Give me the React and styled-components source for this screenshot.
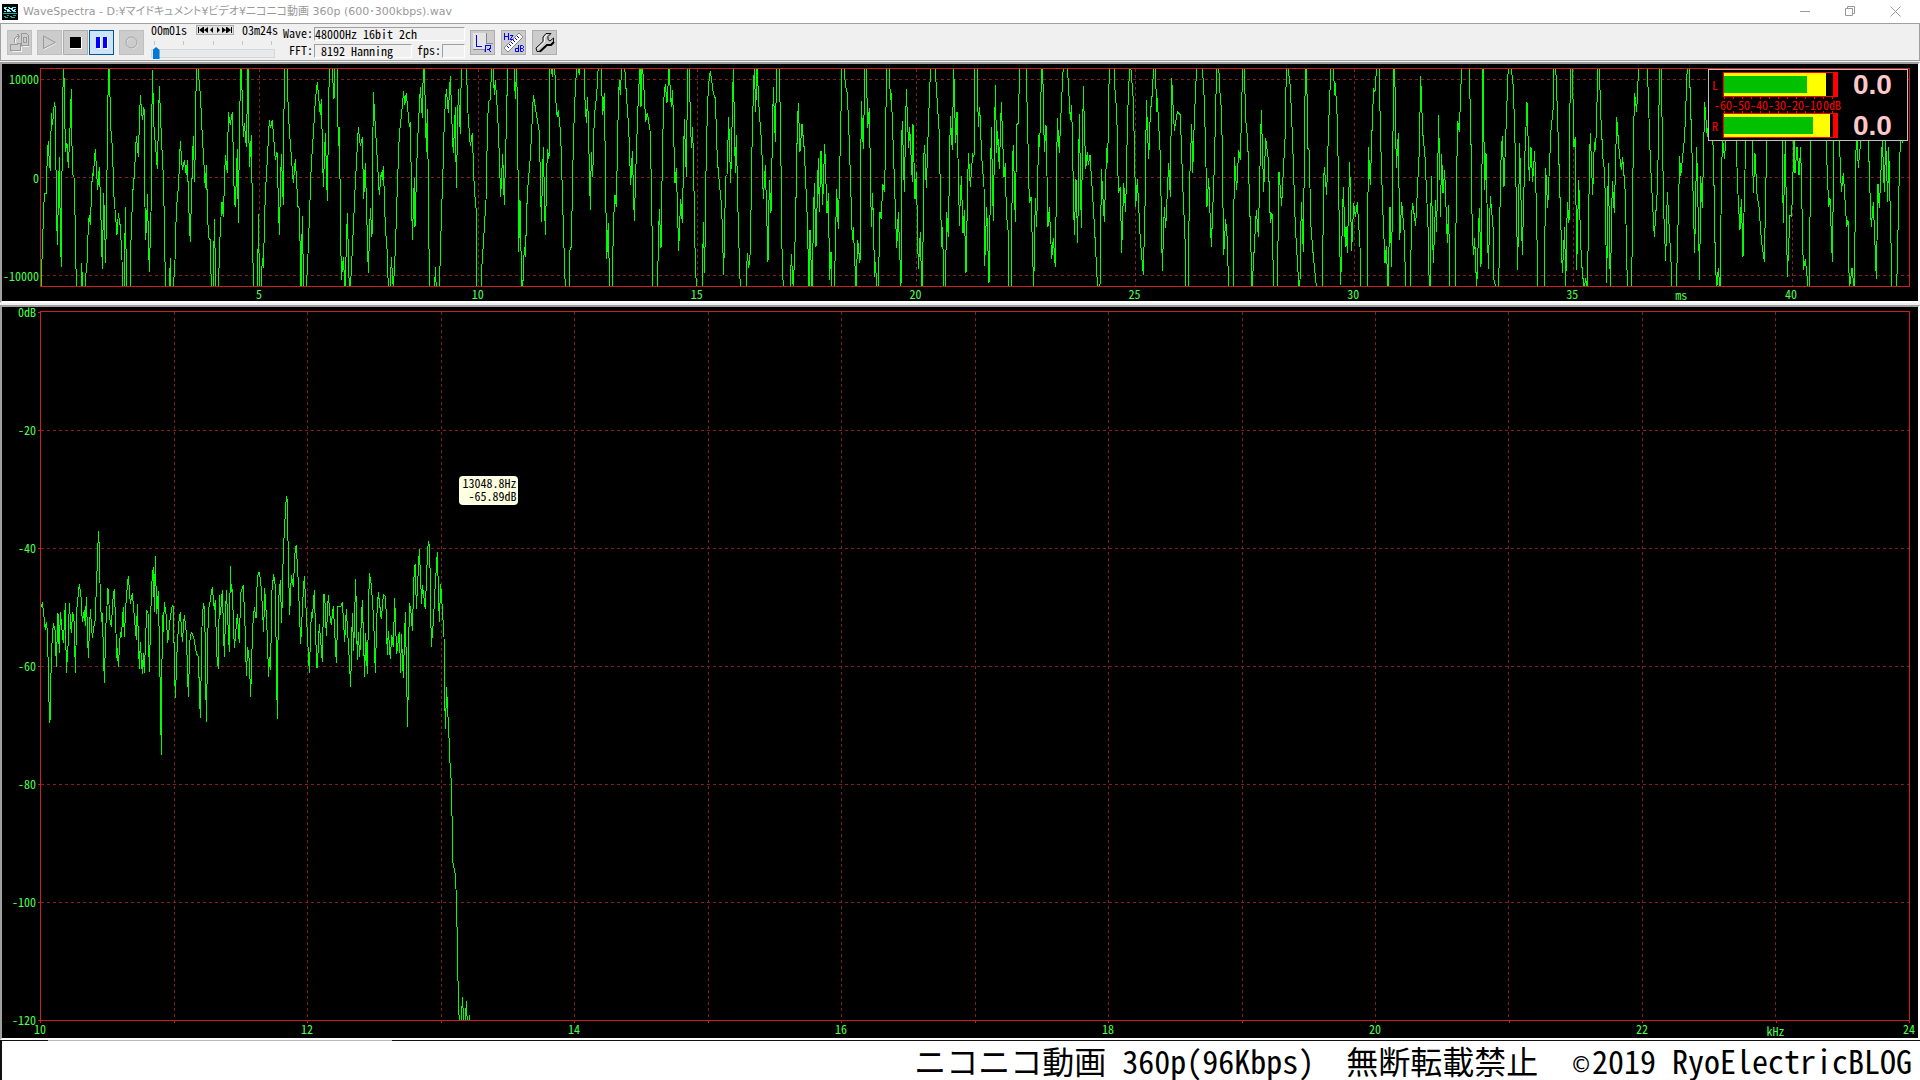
import React from 'react';
import styled, { createGlobalStyle } from 'styled-components';

const GlobalStyle = createGlobalStyle`
    * {
        box-sizing: border-box;
    }

    body {
        margin: 0;
        background-color: #ffffff;
        font-family: "Noto Sans Mono CJK JP", "Noto Sans CJK JP", monospace;
        font-size: 12px;
        line-height: 12px;
        color: #000000;
    }

    button {
        font: inherit;
        padding: 0;
        margin: 0;
    }
`;

const Window=styled.div`
    display: flex;
    flex-direction: column;
    min-height: 100vh;
    background-color: #f0f0f0;
`;

/* title bar */

const TitleBar=styled.header`
    display: flex;
    align-items: center;
    height: 23px;
    padding: 0 16px 0 2px;
    background-color: #ffffff;
`;

const Title=styled.h1`
    flex: 1;
    margin: 0 0 0 5px;
    font-family: "DejaVu Sans", "Noto Sans CJK JP", sans-serif;
    font-size: 11px;
    line-height: 20px;
    font-weight: 400;
    font-feature-settings: "palt";
    color: #999999;
    white-space: nowrap;
`;

const WindowButtons=styled.div`
    display: flex;
    gap: 27px;
`;

const WindowButton=styled.button`
    display: flex;
    align-items: center;
    justify-content: center;
    width: 18px;
    height: 20px;
    border: 0;
    background: none;
`;

/* toolbar */

const ToolBar=styled.div`
    display: flex;
    align-items: center;
    gap: 5px;
    height: 38px;
    margin-bottom: 1px;
    padding: 0 6px;
    border: 1px solid #a0a0a0;
    background-color: #f0f0f0;
`;

const ToolGroup=styled.div`
    display: flex;
    gap: ${props => props.$gap || "1px"};
`;

const ToolButton=styled.button`
    display: flex;
    align-items: center;
    justify-content: center;
    width: 25px;
    height: 25px;
    border: 1px solid ${props => props.$active ? "#005499" : props.disabled ? "#bfbfbf" : "#adadad"};
    background-color: ${props => props.$active ? "#cce4f7" : "#cccccc"};
`;

const Position=styled.div`
    display: flex;
    flex-direction: column;
    width: 129px;
    height: 36px;
    padding-left: 2px;
`;

const PositionTimes=styled.div`
    display: flex;
    align-items: center;
    justify-content: space-between;
    height: 12px;
`;

const Transport=styled.div`
    display: flex;
    align-items: center;
    justify-content: center;
    width: 38px;
    height: 10px;
    border: 1px solid #adadad;
    background-color: #e1e1e1;
`;

const TransportButton=styled.button`
    display: flex;
    border: 0;
    background: none;
`;

const SliderTicks=styled.div`
    display: flex;
    justify-content: space-between;
    width: 118px;
    height: 4px;
    margin: 5px 0 0 3px;
`;

const SliderTick=styled.span`
    width: 1px;
    height: 4px;
    background-color: #c4c4c4;
`;

const Slider=styled.input`
    appearance: none;
    width: 124px;
    height: 13px;
    margin: 2px 0 0;
    background: none;

    &::-webkit-slider-runnable-track {
        height: 9px;
        border: 1px solid #d6d6d6;
        background-color: #e7eaea;
    }

    &::-webkit-slider-thumb {
        appearance: none;
        width: 7px;
        height: 12px;
        margin-top: -3px;
        background-color: #0078d7;
        clip-path: polygon(0 3px, 50% 0, 100% 3px, 100% 100%, 0 100%);
    }
`;

const Info=styled.div`
    display: flex;
    flex-direction: column;
    gap: 3px;
    width: 182px;
`;

const InfoRow=styled.div`
    display: flex;
    gap: 1px;
    height: 14px;
`;

const InfoLabel=styled.label`
    width: ${props => props.$narrow ? "28px" : "30px"};
    text-align: right;
    line-height: 12px;
`;

const Readout=styled.output`
    flex: ${props => props.$grow || 1};
    min-width: 0;
    line-height: 11px;
    border: 1px solid;
    border-color: #a0a0a0 #ffffff #ffffff #a0a0a0;
    white-space: pre;
`;

/* chart panels */

const Panel=styled.section`
    position: relative;
    display: grid;
    flex: ${props => props.$fill ? "1" : "none"};
    grid-template-columns: 38px minmax(0, 1fr);
    grid-template-rows: ${props => props.$fill ? "minmax(0, 1fr) 17px" : "219px 14px"};
    margin-top: ${props => props.$fill ? "2px" : "0"};
    padding: 4px 8px 0 0;
    border: 2px solid;
    border-color: #a0a0a0 #ffffff #ffffff #a0a0a0;
    background-color: #000000;
    color: #4cff4c;
`;

const Plot=styled.div`
    position: relative;
    min-height: 0;
    border: 1px solid #cc1f1f;
`;

const Chart=styled.svg`
    display: block;
    position: absolute;
    width: 100%;
    height: 100%;
    shape-rendering: crispEdges;

    * {
        fill: none;
        vector-effect: non-scaling-stroke;
    }
`;

const GridLine=styled.path`
    stroke: #802020;
    stroke-dasharray: 3 3;
`;

const Trace=styled.polyline`
    stroke: #00ff00;
`;

const ScaleY=styled.div`
    display: flex;
    flex-direction: column;
    justify-content: space-between;
    padding: ${props => props.$inset ? "11px 1px 11px 0" : "1px 0"};
`;

const MarkY=styled.span`
    display: flex;
    align-items: center;
    justify-content: flex-end;
    gap: ${props => props.$tick ? "2px" : "0"};
    height: 0;

    &::after {
        content: "";
        width: ${props => props.$tick ? "2px" : "0"};
        height: 1px;
        background-color: #cc1f1f;
    }
`;

const ScaleX=styled.div`
    display: flex;
    grid-column: 2;
    padding-left: 1px;
`;

const MarkX=styled.span`
    display: flex;
    flex-direction: column;
    align-items: flex-end;
    flex: ${props => props.$span} 0 0;
    width: 0;

    span {
        width: 24px;
        margin: ${props => props.$unit ? "2px" : props.$tick ? "0" : "1px"} -11px 0 0;
        text-align: center;
    }

    &::before {
        content: "";
        width: 1px;
        height: ${props => props.$tick ? "2px" : "0"};
        background-color: #cc1f1f;
    }
`;

const Cursor=styled.div`
    position: absolute;
    left: 22.4%;
    top: 23.2%;
    padding: 0 2px 3px 3px;
    border-radius: 4px;
    background-color: #ffffe1;
    color: #000000;
    line-height: 13px;
    text-align: right;
`;

/* level meter */

const Meter=styled.div`
    position: absolute;
    top: 5px;
    right: 10px;
    display: grid;
    grid-template-columns: 14px 115px 1fr;
    grid-template-rows: 25px 16px 25px;
    align-items: center;
    width: 200px;
    padding: 2px 0;
    border: 1px solid #c0c0c0;
    background-color: #000000;
    color: #ff0000;
`;

const Channel=styled.span`
    padding-left: 3px;
`;

const Bar=styled.div`
    display: flex;
    justify-content: space-between;
    height: 25px;
    border: 1px solid #ff0000;
    border-right-width: 5px;
`;

const Peak=styled.div`
    display: flex;
    align-items: center;
    background-color: #ffff00;
`;

const Level=styled.div`
    height: 17px;
    background-color: #00c000;
`;

const Value=styled.span`
    padding-left: 15px;
    font-family: "Liberation Sans", sans-serif;
    font-size: 28px;
    line-height: 24px;
    font-weight: 700;
    color: #ffc8c8;
`;

const MeterScale=styled.div`
    display: flex;
    flex-direction: column;
    justify-content: space-between;
    grid-column: 1 / 4;
    height: 16px;
    padding-left: 5px;
`;

const MeterTicks=styled.div`
    display: flex;
    justify-content: space-between;
    width: 109px;
    height: 2px;
    margin-left: 10px;

    i {
        width: 1px;
        background-color: #ff0000;
    }
`;

const MeterText=styled.div`
    display: flex;
    gap: 1px;
    height: 12px;
    white-space: nowrap;
`;

/* caption below the window */

const Caption=styled.footer`
    height: 40px;
    padding-right: 8px;
    border-left: 2px solid #101010;
    background: linear-gradient(to right, #101010 46px, #b8b8b8 46px, #b8b8b8 390px, #101010 390px) no-repeat #ffffff;
    background-size: 100% 1px;
    font-size: 32px;
    line-height: 40px;
    text-align: right;
    white-space: pre;
`;

const Copyright=styled.span`
    padding: 0 3px;
    font-family: "DejaVu Sans Mono", monospace;
    font-size: 26px;
    line-height: 26px;
`;

const WAVE_RUNS = [
    { x: -123, points: "124,678 127,560 133,400 139,400 142,280 145,243 148,310 151,332 154,160 157,195 160,170 163,127 166,145 169,420 172,555 178,292 181,518 184,622 187,200 190,25 193,70 196,275 201,250 205,325 211,180 214,88 217,340 222,352 226,500 229,688 244,688 245,610 248,688 256,688 258,640 262,600 265,490 268,465 271,495 277,340 280,345 286,268 293,390 298,320 302,440 307,628 311,400 317,610 320,400 323,200 325,17 328,17 332,200 337,260 342,410 351,524 355,460 361,500 366,600 367,688 373,688 376,442 380,688 390,688 392,570 398,400 403,345 409,228 415,290 421,105 427,180 432,142 436,540 440,500 442,403 448,637 453,460 457,30 462,200 472,328 478,78 484,230 490,350 494,520 496,688 508,688 511,595 513,688 520,688 525,600 529,450 536,370 541,243 547,330 553,300 559,345 562,300 568,490 571,545 574,420 580,228 584,365 587,180 589,17 595,17 598,80 601,100 607,230 616,385 619,316 625,530 631,540 634,688 640,688 643,478 648,688 655,688 661,500 666,425 670,472 676,285 682,340 685,157 691,195 697,155 703,420 706,440 712,268 715,488 719,180 722,17 724,17 730,232 733,190 739,260 744,17 748,322 754,226 757,440 760,688 773,688 775,463 779,688 783,688 787,595 790,625 796,400 802,300 808,180 811,205 817,180 826,300 831,277 838,524 844,282 850,435 853,17 861,17 865,160 871,250 880,370 886,298 894,440 898,445 903,688 907,468 911,688 919,688 925,560 929,450 934,310 940,225 946,120 952,67 961,165 964,118 970,380 976,220 982,422 988,17 996,17 1002,118 1004,17 1011,17 1015,257 1018,200 1024,660 1030,592 1035,688 1042,460 1048,688 1051,688 1057,570 1066,370 1075,202 1081,258 1087,232 1091,418 1096,310 1105,640 1111,445 1116,532 1120,97 1126,200 1132,300 1138,406 1144,335 1147,360 1150,318 1156,500 1162,580 1165,688 1171,688 1174,590 1180,688 1186,570 1192,380 1198,220 1204,170 1211,92 1214,135 1219,100 1228,200 1231,185 1237,540 1243,355 1245,500 1252,260 1261,82 1267,175 1270,17 1273,17 1279,275 1282,148 1286,440 1288,688 1304,688 1306,620 1309,688 1318,688 1324,480 1330,300 1333,175 1339,88 1345,158 1351,48 1357,220 1360,280 1366,142 1369,385 1375,88 1381,222 1384,17 1399,17 1404,160 1411,258 1417,220 1423,390 1429,455 1431,688" },
    { x: 1317, points: "4,688 5,630 12,520 18,420 23,180 26,123 31,120 35,17 39,17 43,105 46,60 52,150 55,205 62,410 68,283 73,435 79,200 83,17 102,17 106,118 110,17 113,200 116,575 120,420 125,672 128,688 133,560 136,592 142,400 151,290 157,175 160,105 172,180 178,215 184,485 190,262 196,524 202,268 207,298 209,17 213,17 217,50 219,17 224,17 229,155 232,170 235,150 242,220 250,500 256,688 268,688 270,570 274,560 280,250 284,130 290,17 294,17 298,45 300,17 312,17 315,120 319,188 323,110 331,450 334,275 338,352 343,170 350,105 355,17 363,17 368,165 373,100 380,598 385,490 389,688 396,688 401,475 405,405 409,440 415,130 418,60 421,105 425,17 434,17 440,118 446,200 452,375 457,273 463,482 469,280 475,110 480,17 483,140 486,17 490,50 497,185 502,158 510,210 515,400 518,688 532,688 535,560 538,448 543,565 547,300 551,120 556,72 561,128 567,27 574,140 578,90 583,300 585,370 589,325 596,572 602,417 607,490 613,178 619,350 623,17 627,17 634,265 638,200 643,440 646,620 650,688 667,688 670,487 674,640 679,260 685,80 691,32 700,100 706,115 712,300 721,400 725,440 731,645 737,350 741,345 746,172 752,370 758,120 760,17 766,340 769,225 775,500 781,688 798,688 802,578 806,625 811,575 817,200 823,17 827,155 831,17 838,160 845,250 850,418 856,315 864,605 868,360 873,458 880,82 886,245 890,17 898,17 902,230 907,645 913,688 931,688 934,583 940,688 946,520 952,200 955,130 960,275 966,193 973,270 982,480 987,688 990,510 996,688 1003,368 1008,560 1015,295 1018,455 1023,273 1028,435 1034,252 1041,460 1046,400 1048,660 1053,575 1056,688 1063,688 1070,388 1075,508 1080,290 1086,17 1092,17 1096,75 1102,100 1108,250 1117,540 1120,502 1128,688 1133,540 1140,610 1144,124 1150,268 1155,17 1159,17 1163,205 1168,145 1174,500 1178,400 1184,650 1186,605 1191,688 1195,688 1200,455 1204,478 1208,372 1214,397 1220,17 1228,17 1231,120 1234,100 1241,295 1250,565 1255,455 1263,688 1265,240 1267,184 1273,395 1279,88 1286,265 1289,200 1297,365 1299,193 1305,418 1309,337 1315,628 1321,516 1325,688 1328,688 1331,290 1334,256 1339,385 1346,170 1352,17 1365,17 1372,130 1378,220 1381,400 1385,560 1388,500 1391,688 1396,688 1400,457 1405,530 1411,168 1417,270 1421,17 1427,250 1431,155 1437,435 1439,497" },
    { x: 2757, points: "1,437 4,348 9,520 13,450 18,640 25,278 31,380 38,283 42,290 44,17 51,17 55,200 59,140 65,290 72,380 74,618 80,440 87,670 94,202 100,482 106,75 110,278 113,213 118,328 124,126 132,352 136,310 139,460 145,520 147,688 154,688 157,310 160,256 166,487 170,195 175,190 179,17 198,17 202,160 208,430 213,410 221,688 226,415 230,500 236,225 239,260 245,17 248,17 253,275 258,195 264,500 268,440 275,598 280,535 286,622 292,175 298,278 304,135 310,17 322,17 331,180 335,135 343,525 348,357 353,550 358,163 364,505 370,78 377,328 382,275 385,315 390,285 400,440 406,550 413,688 421,670 424,328 433,485 440,265 443,310 448,17 462,17 466,115 470,140 475,400 481,382 485,578 491,370 497,455 503,160 509,17 512,17 520,120 527,440 532,358 541,540 550,645 556,400 559,120 566,298 571,160 577,100 581,17 586,17 590,155 592,115 601,290 607,632 613,440 617,505 626,308 631,410 635,55 643,212 652,155 661,165 668,370 676,560 678,688 685,688 688,390 695,193 698,338 703,180 710,17 727,17 733,120 741,440 746,355 754,560 763,320 770,17 776,17 781,120 785,150 791,585 797,478 802,540 806,688 820,688 823,290 830,390 836,270 841,300 848,17 853,17 857,180 863,240 871,500 876,688 883,560 889,450 895,530 904,151 911,395 917,235 925,300 931,488 936,460 941,688 952,688 957,337 965,437 970,330 976,220 979,17 983,17 991,80 998,250 1006,500 1012,600 1017,688 1020,660 1024,425 1030,575 1036,17 1040,17 1043,265 1047,268 1053,500 1060,590 1070,688 1088,688 1090,380 1093,320 1100,405 1106,190 1113,17 1120,17 1124,105 1126,70 1132,180 1138,500 1142,675 1150,382 1156,560 1158,500 1162,578 1169,305 1175,572 1181,430 1186,470 1192,427 1200,560 1202,688 1222,688 1225,262 1231,375 1237,180 1241,88 1245,95 1250,17 1257,17 1262,240 1268,440 1275,610 1279,557 1284,688 1290,440 1295,620 1301,17 1304,17 1309,325 1315,220 1319,540 1325,427 1333,520 1337,688 1351,688 1355,460 1358,430 1367,497 1378,270 1382,48 1388,215 1395,290 1404,500 1408,688 1410,688 1414,348 1420,610 1427,420 1430,515 1436,165 1439,360" },
    { x: 4197, points: "1,470 5,283 9,400 14,330 22,550 26,435 29,688 46,688 49,400 53,183 58,215 65,17 87,17 92,180 97,530 101,585 104,535 110,688 118,445 123,620 129,17 134,390 138,280 145,628 151,408 159,500 162,660 170,688 176,688 182,320 187,227 192,380 199,180 205,17 213,17 220,80 226,280 233,630 239,250 247,585 254,300 261,127 268,362 273,262 278,365 284,272 290,460 293,688 313,688 317,325 323,445 333,210 340,140 341,17 347,17 352,150 358,345 367,640 374,500 377,688 382,425 387,490 391,17 397,17 402,260 406,232 410,630 416,360 424,600 432,688 437,655 442,688 449,290 451,220 458,405 463,245 467,270 474,17 478,17 482,160 490,315 494,325 500,670 505,308 511,688 517,362 523,460 530,172 538,280 544,330 548,292 556,400 561,630 563,688 575,688 580,240 584,100 590,155 596,17 622,17 630,270 634,362 643,530 652,390 655,260 659,17 663,17 668,270 671,450 677,602 682,395 694,625 695,688 709,688 715,460 719,288 722,348 734,230 742,17 748,17 755,240 764,580 770,262 779,660 782,347 787,445 794,127 802,230 806,180 820,260 826,600 830,688 835,625 840,688 845,320 848,240 854,298 860,150 870,100 888,240 895,430 900,510 904,418 909,590 915,330 922,100 930,100 937,240 940,398 945,280 952,420 956,425 964,540 973,605 980,260 985,100 1010,100 1026,240 1030,490 1036,240 1042,650 1050,465 1055,470 1062,240 1065,340 1071,260 1077,345 1082,260 1090,630 1096,598 1105,688 1108,688 1112,270 1118,100 1148,100 1158,240 1166,440 1170,415 1177,605 1182,240 1188,60 1198,240 1204,395 1210,340 1220,500 1224,480 1228,688 1236,625 1243,688 1248,270 1251,240 1255,325 1264,220 1275,60 1285,240 1292,460 1294,500 1300,427 1309,658 1314,372 1318,445 1327,240 1333,395 1337,240 1343,425 1346,260 1352,500 1356,688 1370,688 1377,380 1381,242 1386,200 1388,250" },
];

const SPECTRUM_RUNS = [
    { x: -123, points: "124,440 127,427 130,450 136,510 139,485 143,520 145,660 149,788 151,770 154,580 160,490 166,515 169,622 172,510 174,460 178,580 181,457 190,550 196,430 199,638 204,560 208,430 214,520 218,455 223,490 226,638 231,440 238,373 243,410 247,487 253,450 256,497 259,411 265,593 271,447 277,533 283,490 286,480 289,380 293,290 295,213 298,260 300,370 304,485 307,460 313,668 318,490 324,385 330,480 334,500 340,400 343,388 348,520 350,595 352,563 355,622 361,517 364,530 370,442 373,530 379,410 385,348 391,432 397,400 403,470 409,540 412,433 418,628 421,545 427,643 430,580 433,640 440,450 444,460 448,635 454,400 457,345 460,322 463,455 466,289 470,462 475,394 481,700 484,884 487,465 490,515 493,427 499,470 503,550 511,470 517,436 520,440 523,600 526,715 532,550 538,470 541,457 547,545 553,465 559,520 565,712 570,540 574,515 583,540 589,580 595,590 601,775 606,500 610,430 614,445 619,785 625,450 631,420 637,380 643,450 646,420 650,580 655,628 658,404 661,465 667,390 673,590 679,390 685,515 688,575 691,319 694,395 697,390 703,565 712,463 718,550 722,400 730,376 736,520 739,648 743,562 748,600 752,710 758,500 763,442 768,475 772,350 778,335" },
    { x: 597, points: "58,335 64,385 71,517 74,385 80,480 86,652 88,590 92,630 95,400 101,343 106,380 109,600 112,778 115,430 121,360 125,490 130,270 136,160 139,108 142,120 145,300 149,464 154,346 160,380 166,260 169,258 175,370 182,553 188,430 193,347 200,480 208,638 214,455 217,475 223,391 230,620 232,625 238,493 247,605 251,404 254,404 259,527 265,404 271,480 274,494 280,438 289,608 294,440 302,440 307,425 314,545 319,447 328,600 332,680 337,460 341,572 347,358 352,600 355,515 359,592 367,420 374,650 377,520 382,643 388,340 394,375 401,480 406,638 411,460 415,397 424,478 430,404 437,410 442,585 445,512 451,598 455,525 460,562 464,415 470,583 478,515 482,640 484,523 490,653 496,457 500,660 503,800 508,430 512,445 517,512 523,320 526,313 529,448 535,330 538,268 545,433 547,374 556,448 562,290 565,243 569,260 574,560 580,485 586,370 592,277 598,487 602,373 607,445 612,530 614,690 616,808 620,680 622,740 626,800 629,900 632,930 634,978 637,1108 639,1210 642,1223 646,1245 650,1330 652,1470 655,1608 658,1690 664,1690 667,1612 670,1659 671,1690 676,1690 679,1624 682,1690 687,1690 688,1665 690,1690" },
];

const WAVE_GRID_X = [655, 1312, 1969, 2626, 3283, 3940, 4597, 5254];
const WAVE_GRID_Y = [31, 325, 619];
const SPECTRUM_GRID_X = [400, 800, 1201, 1601, 2001, 2402, 2802, 3202, 3603, 4003, 4403, 4803, 5204];
const SPECTRUM_GRID_Y = [355, 709, 1063, 1417, 1771];

const WAVE_SCALE = [
    { text: "5", span: 219 }, { text: "10", span: 219 }, { text: "15", span: 219 },
    { text: "20", span: 219 }, { text: "25", span: 219 }, { text: "30", span: 219 },
    { text: "35", span: 219 }, { text: "ms", span: 109, unit: true }, { text: "40", span: 110 },
    { text: "", span: 118 },
];

const SPECTRUM_SCALE = ["", "12", "", "14", "", "16", "", "18", "", "20", "", "22", "kHz", "24"];

const ChartGraph = ({ width, height, gridX, gridY, runs, shift, label }) => (
    <Chart viewBox={`0 0 ${width} ${height}`} preserveAspectRatio="none" role="img" aria-label={label}>
        {gridY.map(y => <GridLine key={y} d={`M0 ${y}H${width}`} />)}
        {gridX.map(x => <GridLine key={x} d={`M${x} 0V${height}`} />)}
        {runs.map(run => (
            <g key={run.x} transform={`translate(${run.x} ${shift})`}>
                <Trace points={run.points} />
            </g>
        ))}
    </Chart>
);

const MeterBar = ({ level, peak }) => (
    <Bar>
        <Peak style={{ width: `${peak}%` }}>
            <Level style={{ width: `${level / peak * 100}%` }} />
        </Peak>
    </Bar>
);

const AppIcon = () => (
    <svg width="16" height="16" viewBox="0 0 16 16" shapeRendering="crispEdges">
        <rect width="16" height="16" fill="#000" />
        <path d="M2 3.5h3M6 3.5h2M10 3.5h4M3 5.5h4M9 5.5h2M12 5.5h2M2 7.5h2M5 7.5h4M11 7.5h3" stroke="#4ff" />
        <path d="M2 4.5h2M7 4.5h4M5 6.5h3M10 6.5h3" stroke="#fff" />
        <path d="M1 9.5h14M2 12.5h2M5 11.5h2M8 12.5h2M11 11.5h3M3 13.5h3M9 13.5h4" stroke="#2aa" />
    </svg>
);

const OpenIcon = () => (
    <svg width="21" height="21" viewBox="0 0 21 21" fill="none" stroke="#999" shapeRendering="crispEdges">
        <path d="M2.5 19.5h10v-5M13.5 14.5h6v-10M6.5 11V7.5l2-2" stroke="#f4f4f4" />
        <path d="M5.5 11V6.5l2-2H10M8.5 2l2 2.5-2 2.5" />
        <path d="M12.5 1.5h5l2 2v10h-7zM14.5 5v6M17.5 5v6M14 5.5h3M14 10.5h3" />
        <path d="M1.5 12.5h7v-1h3v7h-10z" />
    </svg>
);

const PlayIcon = () => (
    <svg width="15" height="15" viewBox="0 0 15 15" fill="none">
        <path d="M2 14.5L14 8" stroke="#f4f4f4" />
        <path d="M1.5 13.5V1L13.5 7.5z" stroke="#999" />
    </svg>
);

const StopIcon = () => (
    <svg width="13" height="13" viewBox="0 0 13 13" shapeRendering="crispEdges">
        <path d="M1 12.5h11.5V1" fill="none" stroke="#fff" />
        <rect x="1" y="1" width="11" height="11" fill="#000" />
    </svg>
);

const PauseIcon = () => (
    <svg width="13" height="13" viewBox="0 0 13 13" shapeRendering="crispEdges">
        <rect x="2" y="1" width="4" height="12" fill="#fff" />
        <rect x="9" y="1" width="4" height="12" fill="#fff" />
        <rect x="1" y="1" width="4" height="11" fill="#00f" />
        <rect x="8" y="1" width="4" height="11" fill="#00f" />
    </svg>
);

const RecordIcon = () => (
    <svg width="15" height="15" viewBox="0 0 15 15" fill="none">
        <circle cx="8" cy="8" r="5.5" stroke="#f4f4f4" />
        <circle cx="7.5" cy="7.5" r="5.5" stroke="#999" />
    </svg>
);

const ChannelIcon = () => (
    <svg width="21" height="21" viewBox="0 0 21 21" fill="none" shapeRendering="crispEdges">
        <rect x="1" y="1" width="13" height="16" fill="#e4e4e4" />
        <path d="M14.5 1v10.5h6M1 17.5h11.5V20" stroke="#888" />
        <path d="M4.5 3v11.5H10" stroke="#00f" />
        <path d="M13.5 20v-7h4l1 1v2l-1 1h-3M16.5 17l2 3" stroke="#00f" />
    </svg>
);

const RulerIcon = () => (
    <svg width="23" height="23" viewBox="0 0 23 23" fill="none">
        <path d="M2 17L17 2l4 4L6 21z" fill="#fff" stroke="#888" />
        <path d="M5 15l2 2M7 13l2 2M9 11l2 2M11 9l2 2M13 7l2 2M15 5l2 2" stroke="#00f" />
        <path d="M2.5 2v7M6.500 2v7M2.5 5.5h4M8 4.5h3l-3 4h3.5" stroke="#00f" />
        <path d="M16.5 14v7M16.5 17.5h-3v3h3M18.5 14.5v6h2l1-1v-1l-1-1h-2h2l1-1v-1l-1-1z" stroke="#00f" />
    </svg>
);

const WrenchIcon = () => (
    <svg width="21" height="21" viewBox="0 0 21 21">
        <path d="M2 16L9 9.5V5l3-3.5h5L14 4.5v3l2 1.500L19.5 6v4l-3 3h-4l-6.500 6.500H3z" fill="#c8c8c8" stroke="#111" />
        <path d="M3.5 17L10.500 10V5.5L13 3" fill="none" stroke="#fff" />
        <path d="M6 19.5l7-6.500h4l3-3" fill="none" stroke="#000" strokeWidth="2" />
    </svg>
);

export default function App() {
    return (
        <Window>
            <GlobalStyle />
            <TitleBar>
                <AppIcon />
                <Title>WaveSpectra - D:¥マイドキュメント¥ビデオ¥ニコニコ動画 360p (600･300kbps).wav</Title>
                <WindowButtons>
                    <WindowButton aria-label="Minimize">
                        <svg width="11" height="11" viewBox="0 0 11 11" stroke="#999" fill="none"><path d="M0 5.5h10" /></svg>
                    </WindowButton>
                    <WindowButton aria-label="Restore">
                        <svg width="11" height="11" viewBox="0 0 11 11" stroke="#999" fill="none"><path d="M.5 2.5h7v7h-7zM2.5 2V.5h7v7H8" /></svg>
                    </WindowButton>
                    <WindowButton aria-label="Close">
                        <svg width="11" height="11" viewBox="0 0 11 11" stroke="#999" fill="none"><path d="M.5.5l10 10M10.5.5l-10 10" /></svg>
                    </WindowButton>
                </WindowButtons>
            </TitleBar>

            <ToolBar>
                <ToolButton disabled aria-label="Open"><OpenIcon /></ToolButton>
                <ToolGroup>
                    <ToolButton disabled aria-label="Play"><PlayIcon /></ToolButton>
                    <ToolButton aria-label="Stop"><StopIcon /></ToolButton>
                    <ToolButton $active aria-label="Pause"><PauseIcon /></ToolButton>
                </ToolGroup>
                <ToolButton disabled aria-label="Record"><RecordIcon /></ToolButton>
                <Position>
                    <PositionTimes>
                        <span>00m01s</span>
                        <Transport>
                            <TransportButton aria-label="Start">
                                <svg width="10" height="8" viewBox="0 0 10 8"><path d="M0 1h1v6H0zM5 1v6L1 4zM5 1h1v6H5zM10 1v6L6 4z" /></svg>
                            </TransportButton>
                            <TransportButton aria-label="Back">
                                <svg width="7" height="8" viewBox="0 0 7 8"><path d="M5 1v6L2 4z" /></svg>
                            </TransportButton>
                            <TransportButton aria-label="Forward">
                                <svg width="7" height="8" viewBox="0 0 7 8"><path d="M2 1v6l3-3z" /></svg>
                            </TransportButton>
                            <TransportButton aria-label="End">
                                <svg width="10" height="8" viewBox="0 0 10 8"><path d="M0 1v6l4-3zM4 1h1v6H4zM5 1v6l4-3zM9 1h1v6H9z" /></svg>
                            </TransportButton>
                        </Transport>
                        <span>03m24s</span>
                    </PositionTimes>
                    <SliderTicks>
                        <SliderTick /><SliderTick /><SliderTick /><SliderTick /><SliderTick />
                    </SliderTicks>
                    <Slider type="range" min="0" max="204" defaultValue="1" aria-label="Position" />
                </Position>
                <Info>
                    <InfoRow>
                        <InfoLabel htmlFor="wave">Wave:</InfoLabel>
                        <Readout id="wave">48000Hz 16bit 2ch</Readout>
                    </InfoRow>
                    <InfoRow>
                        <InfoLabel htmlFor="fft">FFT:</InfoLabel>
                        <Readout id="fft" $grow={100}> 8192 Hanning</Readout>
                        <InfoLabel $narrow htmlFor="fps">fps:</InfoLabel>
                        <Readout id="fps" $grow={22} />
                    </InfoRow>
                </Info>
                <ToolGroup $gap="6px">
                    <ToolButton aria-label="Channels"><ChannelIcon /></ToolButton>
                    <ToolButton aria-label="Scale"><RulerIcon /></ToolButton>
                    <ToolButton aria-label="Settings"><WrenchIcon /></ToolButton>
                </ToolGroup>
            </ToolBar>

            <Panel>
                <ScaleY $inset>
                    {["10000", "0", "-10000"].map(text => <MarkY key={text}>{text}</MarkY>)}
                </ScaleY>
                <Plot>
                    <ChartGraph
                        width={5604}
                        height={651}
                        gridX={WAVE_GRID_X}
                        gridY={WAVE_GRID_Y}
                        runs={WAVE_RUNS}
                        shift={-27}
                        label="Waveform"
                    />
                </Plot>
                <ScaleX>
                    {WAVE_SCALE.map((mark, i) => (
                        <MarkX key={i} $span={mark.span} $unit={mark.unit}><span>{mark.text}</span></MarkX>
                    ))}
                </ScaleX>
                <Meter>
                    <Channel>L</Channel>
                    <MeterBar level={76} peak={94} />
                    <Value>0.0</Value>
                    <MeterScale>
                        <MeterTicks>{Array.from({ length: 13 }, (_, i) => <i key={i} />)}</MeterTicks>
                        <MeterText><span>-60-50-40-30-20-10</span><span>0dB</span></MeterText>
                        <MeterTicks>{Array.from({ length: 13 }, (_, i) => <i key={i} />)}</MeterTicks>
                    </MeterScale>
                    <Channel>R</Channel>
                    <MeterBar level={82} peak={97} />
                    <Value>0.0</Value>
                </Meter>
            </Panel>

            <Panel $fill>
                <ScaleY>
                    {["0dB", "-20", "-40", "-60", "-80", "-100", "-120"].map(text => <MarkY key={text} $tick>{text}</MarkY>)}
                </ScaleY>
                <Plot>
                    <ChartGraph
                        width={5604}
                        height={2124}
                        gridX={SPECTRUM_GRID_X}
                        gridY={SPECTRUM_GRID_Y}
                        runs={SPECTRUM_RUNS}
                        shift={444}
                        label="Spectrum"
                    />
                    <Cursor>
                        <div>13048.8Hz</div>
                        <div>-65.89dB</div>
                    </Cursor>
                </Plot>
                <ScaleX>
                    <MarkX $span={0} $tick><span>10</span></MarkX>
                    {SPECTRUM_SCALE.map((text, i) => (
                        <MarkX key={i} $span={1} $tick $unit={text === "kHz"}><span>{text}</span></MarkX>
                    ))}
                </ScaleX>
            </Panel>

            <Caption>ニコニコ動画 360p(96Kbps)　無断転載禁止　<Copyright>©</Copyright>2019 RyoElectricBLOG</Caption>
        </Window>
    );
}
